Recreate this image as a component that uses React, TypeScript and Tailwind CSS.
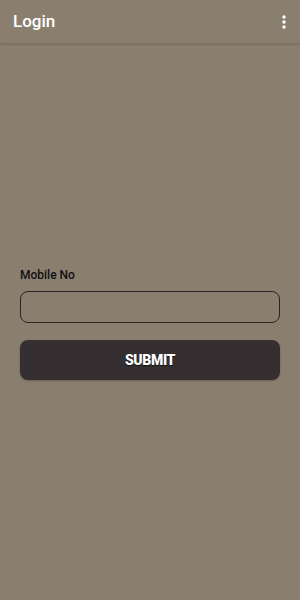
import React from "react";

export default function App() {
  return (
    <div className="w-[300px] h-[600px] bg-[#8a7f6f] flex flex-col" style={{ fontFamily: "Roboto, 'Noto Sans', sans-serif" }}>
      <div className="h-[44px] flex items-center justify-between pl-[13px] pr-[14px] border-b border-[#7d7264] shadow-[0_1px_2px_rgba(0,0,0,0.12)]">
        <span className="text-white text-[17px] font-medium leading-none">Login</span>
        <svg width="4" height="14" viewBox="0 0 4 14" className="text-white">
          <circle cx="2" cy="2" r="1.7" fill="currentColor" />
          <circle cx="2" cy="7" r="1.7" fill="currentColor" />
          <circle cx="2" cy="12" r="1.7" fill="currentColor" />
        </svg>
      </div>
      <div className="flex-1 flex flex-col px-[20px] pt-[225px]">
        <label className="text-[12px] font-medium text-[#111] leading-none">Mobile No</label>
        <input className="mt-[10px] h-[32px] w-full rounded-[8px] border border-[#2a2424] bg-transparent outline-none px-3 text-[14px]" />
        <button className="mt-[17px] h-[40px] w-full rounded-[8px] bg-[#352f31] text-white text-[14px] font-black tracking-tight shadow-[0_1px_2px_rgba(0,0,0,0.25)] [text-shadow:0_1px_1px_rgba(0,0,0,0.7)]">
          SUBMIT
        </button>
      </div>
    </div>
  );
}
